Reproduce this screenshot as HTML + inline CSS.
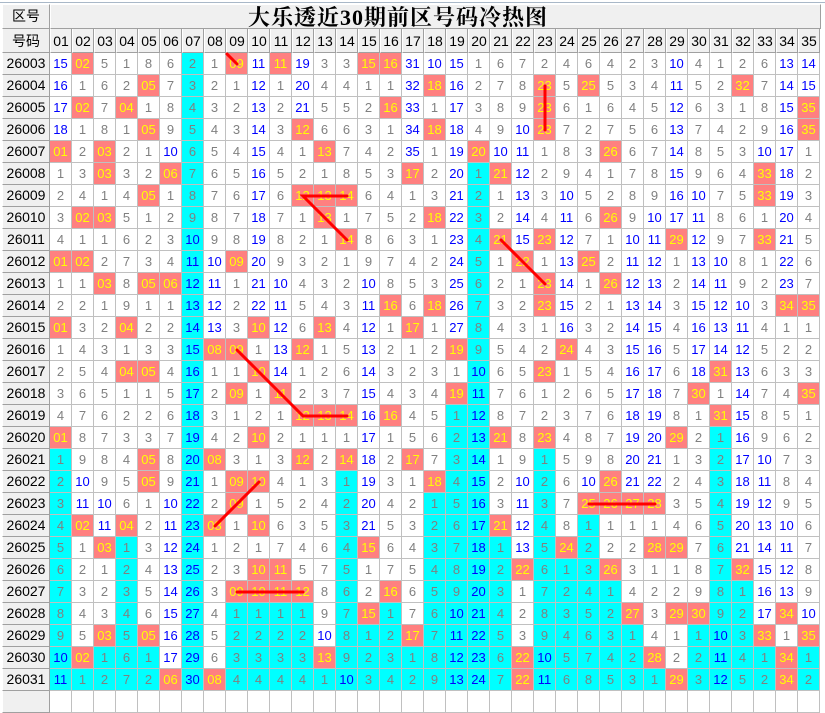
<!DOCTYPE html>
<html><head><meta charset="utf-8"><style>
*{margin:0;padding:0}
body{width:825px;height:698px;background:#fff;overflow:hidden;position:relative;font-family:"Liberation Sans","Noto Sans CJK SC",sans-serif}
.tl{position:absolute;left:0;top:2px;width:825px;height:1px;background:#a9b8c8}
.hd{position:absolute;box-sizing:border-box;background:#f0f0f0;border-right:1px solid #a0a0a0;border-bottom:1px solid #a0a0a0;border-left:1px solid #fff;border-top:1px solid #fff;text-align:center;color:#000;font-size:14px}
.ttl{position:absolute;left:248px;top:6px;font-family:"Liberation Serif","Noto Serif CJK SC",serif;font-weight:bold;font-size:22px;letter-spacing:1px;line-height:24px;color:#000;white-space:nowrap}
.h2{position:absolute;left:2px;top:29px;display:flex;height:24px}
.h2 span{box-sizing:border-box;width:22px;height:24px;background:#f0f0f0;border-right:1px solid #a0a0a0;border-bottom:1px solid #a0a0a0;border-left:1px solid #fff;font-size:14px;line-height:24px;text-align:center;color:#000}
.h2 span.l{width:48px}
.g{position:absolute;left:2px;top:53px}
.r{display:flex;height:22px}
.r b{box-sizing:border-box;width:48px;height:22px;background:#f0f0f0;border-right:1px solid #a0a0a0;border-bottom:1px solid #a0a0a0;border-left:1px solid #fff;font-weight:normal;font-size:14px;line-height:21px;text-align:center;color:#000}
.r i,.r u,.r s,.r a,.r em{display:block;box-sizing:border-box;width:22px;height:22px;border-right:1px solid #c0c0c0;border-bottom:1px solid #c0c0c0;font-style:normal;text-decoration:none;font-size:13px;line-height:21px;text-align:center;color:#808080}
.r u{color:#0000ff}
.r s{background:#ff8080;color:#ffff00}
.r a{background:#00ffff}
.r em{background:#00ffff;color:#0000ff}
svg{position:absolute;left:0;top:0}
</style></head><body>
<div class="tl"></div>
<div class="hd" style="left:2px;top:4px;width:48px;height:25px;line-height:23px">区号</div>
<div class="hd" style="left:50px;top:4px;width:771px;height:25px"></div>
<div class="ttl">大乐透近30期前区号码冷热图</div>
<div class="h2"><span class="l">号码</span><span>01</span><span>02</span><span>03</span><span>04</span><span>05</span><span>06</span><span>07</span><span>08</span><span>09</span><span>10</span><span>11</span><span>12</span><span>13</span><span>14</span><span>15</span><span>16</span><span>17</span><span>18</span><span>19</span><span>20</span><span>21</span><span>22</span><span>23</span><span>24</span><span>25</span><span>26</span><span>27</span><span>28</span><span>29</span><span>30</span><span>31</span><span>32</span><span>33</span><span>34</span><span>35</span></div>
<div class="g">
<div class="r"><b>26003</b><u>15</u><s>02</s><i>5</i><i>1</i><i>8</i><i>6</i><a>2</a><i>1</i><s>09</s><u>11</u><s>11</s><u>19</u><i>3</i><i>3</i><s>15</s><s>16</s><u>31</u><u>10</u><u>15</u><i>1</i><i>6</i><i>7</i><i>2</i><i>4</i><i>6</i><i>4</i><i>2</i><i>3</i><u>10</u><i>4</i><i>1</i><i>2</i><i>6</i><u>13</u><u>14</u></div>
<div class="r"><b>26004</b><u>16</u><i>1</i><i>6</i><i>2</i><s>05</s><i>7</i><a>3</a><i>2</i><i>1</i><u>12</u><i>1</i><u>20</u><i>4</i><i>4</i><i>1</i><i>1</i><u>32</u><s>18</s><u>16</u><i>2</i><i>7</i><i>8</i><s>23</s><i>5</i><s>25</s><i>5</i><i>3</i><i>4</i><u>11</u><i>5</i><i>2</i><s>32</s><i>7</i><u>14</u><u>15</u></div>
<div class="r"><b>26005</b><u>17</u><s>02</s><i>7</i><s>04</s><i>1</i><i>8</i><a>4</a><i>3</i><i>2</i><u>13</u><i>2</i><u>21</u><i>5</i><i>5</i><i>2</i><s>16</s><u>33</u><i>1</i><u>17</u><i>3</i><i>8</i><i>9</i><s>23</s><i>6</i><i>1</i><i>6</i><i>4</i><i>5</i><u>12</u><i>6</i><i>3</i><i>1</i><i>8</i><u>15</u><s>35</s></div>
<div class="r"><b>26006</b><u>18</u><i>1</i><i>8</i><i>1</i><s>05</s><i>9</i><a>5</a><i>4</i><i>3</i><u>14</u><i>3</i><s>12</s><i>6</i><i>6</i><i>3</i><i>1</i><u>34</u><s>18</s><u>18</u><i>4</i><i>9</i><u>10</u><s>23</s><i>7</i><i>2</i><i>7</i><i>5</i><i>6</i><u>13</u><i>7</i><i>4</i><i>2</i><i>9</i><u>16</u><s>35</s></div>
<div class="r"><b>26007</b><s>01</s><i>2</i><s>03</s><i>2</i><i>1</i><u>10</u><a>6</a><i>5</i><i>4</i><u>15</u><i>4</i><i>1</i><s>13</s><i>7</i><i>4</i><i>2</i><u>35</u><i>1</i><u>19</u><s>20</s><u>10</u><u>11</u><i>1</i><i>8</i><i>3</i><s>26</s><i>6</i><i>7</i><u>14</u><i>8</i><i>5</i><i>3</i><u>10</u><u>17</u><i>1</i></div>
<div class="r"><b>26008</b><i>1</i><i>3</i><s>03</s><i>3</i><i>2</i><s>06</s><a>7</a><i>6</i><i>5</i><u>16</u><i>5</i><i>2</i><i>1</i><i>8</i><i>5</i><i>3</i><s>17</s><i>2</i><u>20</u><a>1</a><s>21</s><u>12</u><i>2</i><i>9</i><i>4</i><i>1</i><i>7</i><i>8</i><u>15</u><i>9</i><i>6</i><i>4</i><s>33</s><u>18</u><i>2</i></div>
<div class="r"><b>26009</b><i>2</i><i>4</i><i>1</i><i>4</i><s>05</s><i>1</i><a>8</a><i>7</i><i>6</i><u>17</u><i>6</i><s>12</s><s>13</s><s>14</s><i>6</i><i>4</i><i>1</i><i>3</i><u>21</u><a>2</a><i>1</i><u>13</u><i>3</i><u>10</u><i>5</i><i>2</i><i>8</i><i>9</i><u>16</u><u>10</u><i>7</i><i>5</i><s>33</s><u>19</u><i>3</i></div>
<div class="r"><b>26010</b><i>3</i><s>02</s><s>03</s><i>5</i><i>1</i><i>2</i><a>9</a><i>8</i><i>7</i><u>18</u><i>7</i><i>1</i><s>13</s><i>1</i><i>7</i><i>5</i><i>2</i><s>18</s><u>22</u><a>3</a><i>2</i><u>14</u><i>4</i><u>11</u><i>6</i><s>26</s><i>9</i><u>10</u><u>17</u><u>11</u><i>8</i><i>6</i><i>1</i><u>20</u><i>4</i></div>
<div class="r"><b>26011</b><i>4</i><i>1</i><i>1</i><i>6</i><i>2</i><i>3</i><em>10</em><i>9</i><i>8</i><u>19</u><i>8</i><i>2</i><i>1</i><s>14</s><i>8</i><i>6</i><i>3</i><i>1</i><u>23</u><a>4</a><s>21</s><u>15</u><s>23</s><u>12</u><i>7</i><i>1</i><u>10</u><u>11</u><s>29</s><u>12</u><i>9</i><i>7</i><s>33</s><u>21</u><i>5</i></div>
<div class="r"><b>26012</b><s>01</s><s>02</s><i>2</i><i>7</i><i>3</i><i>4</i><em>11</em><u>10</u><s>09</s><u>20</u><i>9</i><i>3</i><i>2</i><i>1</i><i>9</i><i>7</i><i>4</i><i>2</i><u>24</u><a>5</a><i>1</i><s>22</s><i>1</i><u>13</u><s>25</s><i>2</i><u>11</u><u>12</u><i>1</i><u>13</u><u>10</u><i>8</i><i>1</i><u>22</u><i>6</i></div>
<div class="r"><b>26013</b><i>1</i><i>1</i><s>03</s><i>8</i><s>05</s><s>06</s><em>12</em><u>11</u><i>1</i><u>21</u><u>10</u><i>4</i><i>3</i><i>2</i><u>10</u><i>8</i><i>5</i><i>3</i><u>25</u><a>6</a><i>2</i><i>1</i><s>23</s><u>14</u><i>1</i><s>26</s><u>12</u><u>13</u><i>2</i><u>14</u><u>11</u><i>9</i><i>2</i><u>23</u><i>7</i></div>
<div class="r"><b>26014</b><i>2</i><i>2</i><i>1</i><i>9</i><i>1</i><i>1</i><em>13</em><u>12</u><i>2</i><u>22</u><u>11</u><i>5</i><i>4</i><i>3</i><u>11</u><s>16</s><i>6</i><s>18</s><u>26</u><a>7</a><i>3</i><i>2</i><s>23</s><u>15</u><i>2</i><i>1</i><u>13</u><u>14</u><i>3</i><u>15</u><u>12</u><u>10</u><i>3</i><s>34</s><s>35</s></div>
<div class="r"><b>26015</b><s>01</s><i>3</i><i>2</i><s>04</s><i>2</i><i>2</i><em>14</em><u>13</u><i>3</i><s>10</s><u>12</u><i>6</i><s>13</s><i>4</i><u>12</u><i>1</i><s>17</s><i>1</i><u>27</u><a>8</a><i>4</i><i>3</i><i>1</i><u>16</u><i>3</i><i>2</i><u>14</u><u>15</u><i>4</i><u>16</u><u>13</u><u>11</u><i>4</i><i>1</i><i>1</i></div>
<div class="r"><b>26016</b><i>1</i><i>4</i><i>3</i><i>1</i><i>3</i><i>3</i><em>15</em><s>08</s><s>09</s><i>1</i><u>13</u><s>12</s><i>1</i><i>5</i><u>13</u><i>2</i><i>1</i><i>2</i><s>19</s><a>9</a><i>5</i><i>4</i><i>2</i><s>24</s><i>4</i><i>3</i><u>15</u><u>16</u><i>5</i><u>17</u><u>14</u><u>12</u><i>5</i><i>2</i><i>2</i></div>
<div class="r"><b>26017</b><i>2</i><i>5</i><i>4</i><s>04</s><s>05</s><i>4</i><em>16</em><i>1</i><i>1</i><s>10</s><u>14</u><i>1</i><i>2</i><i>6</i><u>14</u><i>3</i><i>2</i><i>3</i><i>1</i><em>10</em><i>6</i><i>5</i><s>23</s><i>1</i><i>5</i><i>4</i><u>16</u><u>17</u><i>6</i><u>18</u><s>31</s><u>13</u><i>6</i><i>3</i><i>3</i></div>
<div class="r"><b>26018</b><i>3</i><i>6</i><i>5</i><i>1</i><i>1</i><i>5</i><em>17</em><i>2</i><s>09</s><i>1</i><s>11</s><i>2</i><i>3</i><i>7</i><u>15</u><i>4</i><i>3</i><i>4</i><s>19</s><em>11</em><i>7</i><i>6</i><i>1</i><i>2</i><i>6</i><i>5</i><u>17</u><u>18</u><i>7</i><s>30</s><i>1</i><u>14</u><i>7</i><i>4</i><s>35</s></div>
<div class="r"><b>26019</b><i>4</i><i>7</i><i>6</i><i>2</i><i>2</i><i>6</i><em>18</em><i>3</i><i>1</i><i>2</i><i>1</i><s>12</s><s>13</s><s>14</s><u>16</u><s>16</s><i>4</i><i>5</i><a>1</a><em>12</em><i>8</i><i>7</i><i>2</i><i>3</i><i>7</i><i>6</i><u>18</u><u>19</u><i>8</i><i>1</i><s>31</s><u>15</u><i>8</i><i>5</i><i>1</i></div>
<div class="r"><b>26020</b><s>01</s><i>8</i><i>7</i><i>3</i><i>3</i><i>7</i><em>19</em><i>4</i><i>2</i><s>10</s><i>2</i><i>1</i><i>1</i><i>1</i><u>17</u><i>1</i><i>5</i><i>6</i><a>2</a><em>13</em><s>21</s><i>8</i><s>23</s><i>4</i><i>8</i><i>7</i><u>19</u><u>20</u><s>29</s><i>2</i><a>1</a><u>16</u><i>9</i><i>6</i><i>2</i></div>
<div class="r"><b>26021</b><a>1</a><i>9</i><i>8</i><i>4</i><s>05</s><i>8</i><em>20</em><s>08</s><i>3</i><i>1</i><i>3</i><s>12</s><i>2</i><s>14</s><u>18</u><i>2</i><s>17</s><i>7</i><a>3</a><em>14</em><i>1</i><i>9</i><a>1</a><i>5</i><i>9</i><i>8</i><u>20</u><u>21</u><i>1</i><i>3</i><a>2</a><u>17</u><u>10</u><i>7</i><i>3</i></div>
<div class="r"><b>26022</b><a>2</a><u>10</u><i>9</i><i>5</i><s>05</s><i>9</i><em>21</em><i>1</i><s>09</s><s>10</s><i>4</i><i>1</i><i>3</i><a>1</a><u>19</u><i>3</i><i>1</i><s>18</s><a>4</a><em>15</em><i>2</i><u>10</u><a>2</a><i>6</i><u>10</u><s>26</s><u>21</u><u>22</u><i>2</i><i>4</i><a>3</a><u>18</u><u>11</u><i>8</i><i>4</i></div>
<div class="r"><b>26023</b><a>3</a><u>11</u><u>10</u><i>6</i><i>1</i><u>10</u><em>22</em><i>2</i><s>09</s><i>1</i><i>5</i><i>2</i><i>4</i><a>2</a><u>20</u><i>4</i><i>2</i><a>1</a><a>5</a><em>16</em><i>3</i><u>11</u><a>3</a><i>7</i><s>25</s><s>26</s><s>27</s><s>28</s><i>3</i><i>5</i><a>4</a><u>19</u><u>12</u><i>9</i><i>5</i></div>
<div class="r"><b>26024</b><a>4</a><s>02</s><u>11</u><s>04</s><i>2</i><u>11</u><em>23</em><s>08</s><i>1</i><s>10</s><i>6</i><i>3</i><i>5</i><a>3</a><u>21</u><i>5</i><i>3</i><a>2</a><a>6</a><em>17</em><s>21</s><u>12</u><a>4</a><i>8</i><a>1</a><i>1</i><i>1</i><i>1</i><i>4</i><i>6</i><a>5</a><u>20</u><u>13</u><u>10</u><i>6</i></div>
<div class="r"><b>26025</b><a>5</a><i>1</i><s>03</s><a>1</a><i>3</i><u>12</u><em>24</em><i>1</i><i>2</i><i>1</i><i>7</i><i>4</i><i>6</i><a>4</a><s>15</s><i>6</i><i>4</i><a>3</a><a>7</a><em>18</em><a>1</a><u>13</u><a>5</a><s>24</s><a>2</a><i>2</i><i>2</i><s>28</s><s>29</s><i>7</i><a>6</a><u>21</u><u>14</u><u>11</u><i>7</i></div>
<div class="r"><b>26026</b><a>6</a><i>2</i><i>1</i><a>2</a><i>4</i><u>13</u><em>25</em><i>2</i><i>3</i><s>10</s><s>11</s><i>5</i><i>7</i><a>5</a><i>1</i><i>7</i><i>5</i><a>4</a><a>8</a><em>19</em><a>2</a><s>22</s><a>6</a><a>1</a><a>3</a><s>26</s><i>3</i><i>1</i><i>1</i><i>8</i><a>7</a><s>32</s><u>15</u><u>12</u><i>8</i></div>
<div class="r"><b>26027</b><a>7</a><i>3</i><i>2</i><a>3</a><i>5</i><u>14</u><em>26</em><i>3</i><s>09</s><s>10</s><s>11</s><s>12</s><i>8</i><a>6</a><i>2</i><s>16</s><i>6</i><a>5</a><a>9</a><em>20</em><a>3</a><i>1</i><a>7</a><a>2</a><a>4</a><a>1</a><i>4</i><i>2</i><i>2</i><i>9</i><a>8</a><a>1</a><u>16</u><u>13</u><i>9</i></div>
<div class="r"><b>26028</b><a>8</a><i>4</i><i>3</i><a>4</a><i>6</i><u>15</u><em>27</em><i>4</i><a>1</a><a>1</a><a>1</a><a>1</a><i>9</i><a>7</a><s>15</s><a>1</a><i>7</i><a>6</a><em>10</em><em>21</em><a>4</a><i>2</i><a>8</a><a>3</a><a>5</a><a>2</a><s>27</s><i>3</i><s>29</s><s>30</s><a>9</a><a>2</a><u>17</u><s>34</s><u>10</u></div>
<div class="r"><b>26029</b><a>9</a><i>5</i><s>03</s><a>5</a><s>05</s><u>16</u><em>28</em><i>5</i><a>2</a><a>2</a><a>2</a><a>2</a><u>10</u><a>8</a><a>1</a><a>2</a><s>17</s><a>7</a><em>11</em><em>22</em><a>5</a><i>3</i><a>9</a><a>4</a><a>6</a><a>3</a><a>1</a><i>4</i><i>1</i><a>1</a><em>10</em><a>3</a><s>33</s><i>1</i><s>35</s></div>
<div class="r"><b>26030</b><em>10</em><s>02</s><a>1</a><a>6</a><a>1</a><u>17</u><em>29</em><i>6</i><a>3</a><a>3</a><a>3</a><a>3</a><s>13</s><a>9</a><a>2</a><a>3</a><a>1</a><a>8</a><em>12</em><em>23</em><a>6</a><s>22</s><em>10</em><a>5</a><a>7</a><a>4</a><a>2</a><s>28</s><i>2</i><a>2</a><em>11</em><a>4</a><a>1</a><s>34</s><a>1</a></div>
<div class="r"><b>26031</b><em>11</em><a>1</a><a>2</a><a>7</a><a>2</a><s>06</s><em>30</em><s>08</s><a>4</a><a>4</a><a>4</a><a>4</a><a>1</a><em>10</em><a>3</a><a>4</a><a>2</a><a>9</a><em>13</em><em>24</em><a>7</a><s>22</s><em>11</em><a>6</a><a>8</a><a>5</a><a>3</a><a>1</a><s>29</s><a>3</a><em>12</em><a>5</a><a>2</a><s>34</s><a>2</a></div>
<div class="r"><b></b><i></i><i></i><i></i><i></i><i></i><i></i><i></i><i></i><i></i><i></i><i></i><i></i><i></i><i></i><i></i><i></i><i></i><i></i><i></i><i></i><i></i><i></i><i></i><i></i><i></i><i></i><i></i><i></i><i></i><i></i><i></i><i></i><i></i><i></i><i></i></div>
</div>
<svg width="825" height="698" viewBox="0 0 825 698">
<g stroke="#ff0000" stroke-width="3" fill="none" stroke-linecap="round">
<line x1="227" y1="54" x2="237" y2="64"/>
<line x1="545" y1="86" x2="545" y2="130"/>
<polyline points="347,196 303,196 325,218 347,240"/>
<polyline points="501,240 523,262 545,284"/>
<polyline points="237,350 259,372 281,394 303,416 347,416"/>
<polyline points="259,482 237,504 215,526"/>
<line x1="589" y1="504" x2="655" y2="504"/>
<line x1="237" y1="592" x2="303" y2="592"/>
</g>
</svg>
</body></html>
